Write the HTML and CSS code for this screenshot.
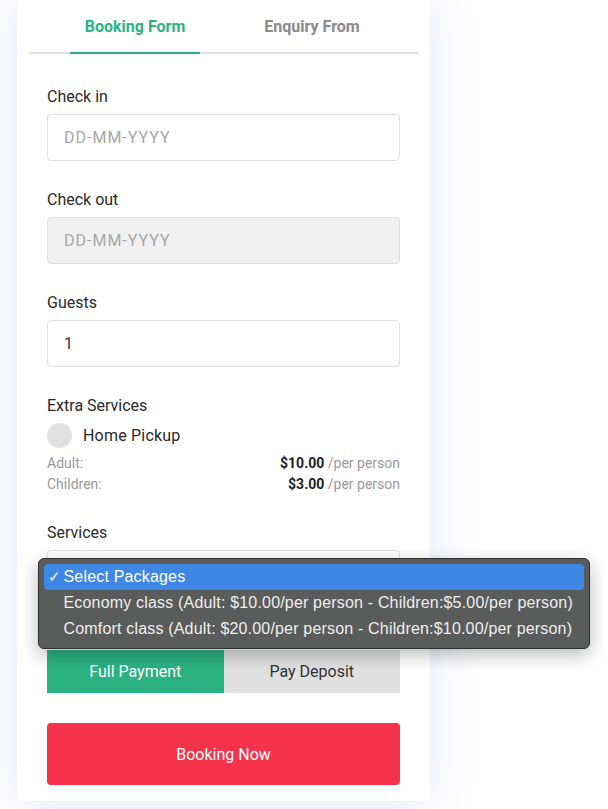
FILE: index.html
```html
<!DOCTYPE html>
<html lang="en">
<head>
<meta charset="utf-8">
<title>Booking Form</title>
<link rel="stylesheet" href="styles.css">
</head>
<body>
<div class="page">
  <div class="card">
    <div class="tabs">
      <div class="tab active">Booking Form</div>
      <div class="tab">Enquiry From</div>
    </div>
    <form class="form">
      <div class="field">
        <label class="label">Check in</label>
        <div class="input placeholder">DD-MM-YYYY</div>
      </div>
      <div class="field">
        <label class="label">Check out</label>
        <div class="input placeholder disabled">DD-MM-YYYY</div>
      </div>
      <div class="field">
        <label class="label">Guests</label>
        <div class="input value">1</div>
      </div>
      <div class="field extra">
        <label class="label">Extra Services</label>
        <div class="check-row">
          <span class="circle"></span>
          <span class="check-text">Home Pickup</span>
        </div>
        <div class="price-row">
          <span class="price-name">Adult:</span>
          <span class="price-val"><b>$10.00</b> /per person</span>
        </div>
        <div class="price-row">
          <span class="price-name">Children:</span>
          <span class="price-val"><b>$3.00</b> /per person</span>
        </div>
      </div>
      <div class="field">
        <label class="label">Services</label>
        <div class="input select"></div>
      </div>
      <div class="toggle">
        <div class="toggle-opt on">Full Payment</div>
        <div class="toggle-opt">Pay Deposit</div>
      </div>
      <div class="submit">Booking Now</div>
    </form>
  </div>
  <div class="dropdown">
    <div class="opt selected"><span class="tick">✓</span>Select Packages</div>
    <div class="opt">Economy class (Adult: $10.00/per person - Children:$5.00/per person)</div>
    <div class="opt">Comfort class (Adult: $20.00/per person - Children:$10.00/per person)</div>
  </div>
</div>
</body>
</html>
```

FILE: styles.css
```css
html, body {
  margin: 0;
  padding: 0;
  background: #ffffff;
  height: 100%;
  overflow: hidden;
}
body {
  font-family: Roboto, "Liberation Sans", sans-serif;
  color: #2a2a2a;
}
.page {
  position: relative;
  padding-left: 17px;
}
.card {
  width: 413px;
  background: #ffffff;
  box-shadow: 0 0 40px 8px rgba(236, 236, 253, 0.9);
  padding-bottom: 16px;
}
.tabs {
  margin: 0 12px;
  border-bottom: 2px solid #e2e2e2;
  display: flex;
  justify-content: center;
  gap: 47px;
}
.tab {
  width: 130px;
  text-align: center;
  font-size: 16px;
  font-weight: 700;
  line-height: 20px;
  padding: 17px 0 15px;
  color: #8a8a8a;
  margin-bottom: -2px;
  border-bottom: 2px solid transparent;
}
.tab.active {
  color: #2bb283;
  border-bottom-color: #2bb283;
}
.form {
  padding: 33px 30px 0;
  display: flex;
  flex-direction: column;
}
.field {
  display: flex;
  flex-direction: column;
  gap: 7px;
  margin-bottom: 29px;
}
.label {
  font-size: 16px;
  line-height: 20px;
  color: #2a2a2a;
}
.input {
  height: 45px;
  border: 1px solid #e0e0e0;
  border-radius: 4px;
  background: #fff;
  font-size: 16px;
  line-height: 45px;
  padding: 0 16px;
}
.placeholder {
  color: #a6a6a6;
  letter-spacing: 1px;
}
.disabled { background: #f1f1f1; }
.value { color: #333; }
.extra { gap: 0; }
.extra .label { margin-bottom: 7px; }
.check-row {
  display: flex;
  align-items: center;
  gap: 11px;
  height: 25px;
  margin-bottom: 5px;
}
.circle {
  width: 25px;
  height: 25px;
  border-radius: 50%;
  background: #e1e1e1;
}
.check-text {
  font-size: 16px;
  color: #2a2a2a;
  letter-spacing: 0.2px;
}
.price-row {
  display: flex;
  justify-content: space-between;
  font-size: 14px;
  line-height: 20.5px;
  color: #9a9a9a;
}
.price-val b {
  color: #1e1e1e;
  font-weight: 700;
}
.toggle {
  display: flex;
  height: 43px;
  margin-top: 24px;
}
.toggle-opt {
  flex: 1;
  display: flex;
  align-items: center;
  justify-content: center;
  font-size: 16px;
  background: #e0e0e0;
  color: #333;
}
.toggle-opt.on {
  background: #2bb283;
  color: #ffffff;
}
.submit {
  margin-top: 30px;
  height: 62px;
  border-radius: 4px;
  background: #f5334c;
  color: #ffffff;
  font-size: 16px;
  display: flex;
  align-items: center;
  justify-content: center;
}
.dropdown {
  position: absolute;
  left: 38px;
  top: 558px;
  width: 540px;
  padding: 5px 5px 6px;
  background: #5a5c5c;
  border: 1px solid #2f3030;
  border-radius: 6px;
  box-shadow: 0 6px 18px rgba(0, 0, 0, 0.28);
  font-family: "Liberation Sans", Arial, sans-serif;
  font-size: 16px;
  letter-spacing: 0.18px;
  color: #eeeeee;
}
.opt {
  height: 26px;
  line-height: 26px;
  padding-left: 19.5px;
  position: relative;
  white-space: nowrap;
}
.opt.selected {
  background: #3f87e4;
  border-radius: 4px;
  color: #ffffff;
}
.tick {
  position: absolute;
  left: 4px;
  top: 0;
  font-size: 15px;
}
```
